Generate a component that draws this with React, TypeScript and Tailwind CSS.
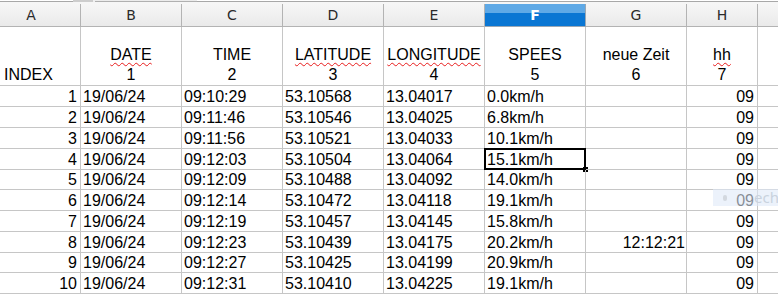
import React from 'react';

const cols = [
  { key: 'A', w: 'w-[81px]' },
  { key: 'B', w: 'w-[101px]' },
  { key: 'C', w: 'w-[101px]' },
  { key: 'D', w: 'w-[101px]' },
  { key: 'E', w: 'w-[101px]' },
  { key: 'F', w: 'w-[101px]' },
  { key: 'G', w: 'w-[101px]' },
  { key: 'H', w: 'w-[71px]' },
];

const rows: string[][] = [
  ['1', '19/06/24', '09:10:29', '53.10568', '13.04017', '0.0km/h', '', '09'],
  ['2', '19/06/24', '09:11:46', '53.10546', '13.04025', '6.8km/h', '', '09'],
  ['3', '19/06/24', '09:11:56', '53.10521', '13.04033', '10.1km/h', '', '09'],
  ['4', '19/06/24', '09:12:03', '53.10504', '13.04064', '15.1km/h', '', '09'],
  ['5', '19/06/24', '09:12:09', '53.10488', '13.04092', '14.0km/h', '', '09'],
  ['6', '19/06/24', '09:12:14', '53.10472', '13.04118', '19.1km/h', '', '09'],
  ['7', '19/06/24', '09:12:19', '53.10457', '13.04145', '15.8km/h', '', '09'],
  ['8', '19/06/24', '09:12:23', '53.10439', '13.04175', '20.2km/h', '12:12:21', '09'],
  ['9', '19/06/24', '09:12:27', '53.10425', '13.04199', '20.9km/h', '', '09'],
  ['10', '19/06/24', '09:12:31', '53.10410', '13.04225', '19.1km/h', '', '09'],
];

const rowH = ['h-[21px]', 'h-[21px]', 'h-[21px]', 'h-[21px]', 'h-[20px]', 'h-[21px]', 'h-[21px]', 'h-[21px]', 'h-[20px]', 'h-[21px]'];

// how each column aligns its values
const align = ['justify-end pr-[3px]', 'pl-[2px]', 'pl-[2px]', 'pl-[2px]', 'pl-[2px]', 'pl-[2px]', 'justify-end pr-[1px]', 'justify-end pr-[3px]'];

const titles: { word: string; num: string; wavy?: boolean }[] = [
  { word: 'DATE', num: '1', wavy: true },
  { word: 'TIME', num: '2' },
  { word: 'LATITUDE', num: '3', wavy: true },
  { word: 'LONGITUDE', num: '4', wavy: true },
  { word: 'SPEES', num: '5' },
  { word: 'neue Zeit', num: '6' },
  { word: 'hh', num: '7', wavy: true },
];

const grid = 'border-r border-b border-[#c6c6c6]';

const App: React.FC = () => {
  return (
    <div className="relative w-[778px] h-[298px] overflow-hidden bg-white text-black font-['Liberation_Sans',Arial,sans-serif] text-[16px] leading-[normal]">
      {/* toolbar remnant */}
      <div className="flex h-[2px]">
        <div className="w-[73px] bg-white border-b border-[#a8a8a8]" />
        <div className="w-[20px] bg-[#cdcdcd]" />
        <div className="w-[2px] bg-[#efefef]" />
        <div className="w-[102px] bg-[#ececec] border-b border-[#b0b0b0]" />
        <div className="flex-1 bg-white border-b border-[#a8a8a8]" />
      </div>
      <div className="h-[2px] bg-[#f6f6f6]" />

      {/* column letters */}
      <div className="flex h-[23px] font-['DejaVu_Sans',sans-serif] text-[14px] text-[#2a2a2a]">
        {cols.map((c) =>
          c.key === 'F' ? (
            <div
              key={c.key}
              className={`${c.w} flex items-center justify-center border-r border-b border-[#9aa7b4] bg-[linear-gradient(#5fa9e6_0%,#5fa9e6_40%,#0a76d3_40%,#0a76d3_100%)] text-white font-bold`}
            >
              F
            </div>
          ) : (
            <div
              key={c.key}
              className={`${c.w} flex items-center justify-center border-r border-b border-[#b3b3b3] bg-gradient-to-b from-[#f6f6f6] to-[#eaeaea] ${c.key === 'A' ? 'pr-[18px]' : ''}`}
            >
              {c.key}
            </div>
          )
        )}
        <div className="flex-1 border-b border-[#b3b3b3] bg-gradient-to-b from-[#f6f6f6] to-[#eaeaea]" />
      </div>

      {/* title row */}
      <div className="flex h-[59px] leading-[20px]">
        <div className={`${cols[0].w} ${grid} flex items-end pl-[4px]`}>INDEX</div>
        {titles.map((t, i) => (
          <div key={t.word} className={`${cols[i + 1].w} ${grid} flex flex-col items-center justify-end`}>
            <span className={t.wavy ? 'underline decoration-wavy decoration-[#e81c1c] decoration-1 underline-offset-[2px]' : ''}>
              {t.word}
            </span>
            <span>{t.num}</span>
          </div>
        ))}
        <div className="flex-1 border-b border-[#c6c6c6]" />
      </div>

      {/* data rows */}
      {rows.map((r, ri) => (
        <div key={ri} className={`flex ${rowH[ri]}`}>
          {r.map((v, ci) => (
            <div key={ci} className={`relative ${cols[ci].w} ${grid} flex items-end whitespace-nowrap ${align[ci]}`}>
              {v}
              {ri === 3 && ci === 5 && (
                <>
                  <div className="absolute -left-px -top-px -right-px -bottom-px border-2 border-black" />
                  <div className="absolute -right-[3px] -bottom-[3px] w-[5px] h-[5px] bg-black" />
                </>
              )}
            </div>
          ))}
          <div className="flex-1 border-b border-[#c6c6c6]" />
        </div>
      ))}

      {/* faint floating badge */}
      <div className="absolute left-[713px] top-[189px] w-[66px] h-[17px] bg-[#dfe9f8]/60 flex items-center">
        <div className="ml-[10px] w-[6px] h-[6px] rounded-full bg-[#d3d8df]" />
        <span className="ml-[27px] text-[15px] leading-none text-[#c9d2de] font-['Noto_Sans',sans-serif]">ech</span>
      </div>
    </div>
  );
};

export default App;
